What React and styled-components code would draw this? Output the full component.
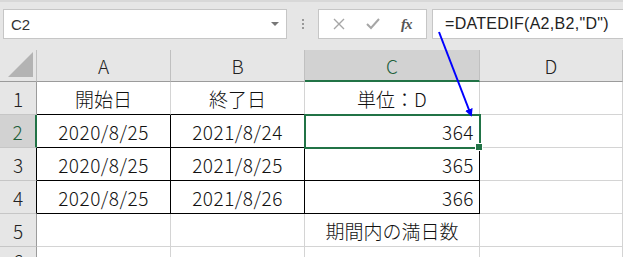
import React from 'react'
import styled, { createGlobalStyle } from 'styled-components'

const Global = createGlobalStyle`
  html, body { margin: 0; padding: 0; background: #fff; }
  body { font-family: "Noto Sans CJK JP", "Liberation Sans", sans-serif; }
`

const Page = styled.div`
  position: relative;
  width: 623px;
  height: 257px;
  overflow: hidden;
  background: #fff;
`

const Toolbar = styled.div`
  height: 50px;
  box-sizing: border-box;
  background: #e6e6e6;
  border-top: 2px solid #d8d8d8;
  display: flex;
  align-items: flex-start;
  padding-top: 7px;
  padding-left: 3px;
`

const NameBox = styled.div`
  width: 284px;
  height: 30px;
  box-sizing: border-box;
  background: #fff;
  border: 1px solid #c6c6c6;
  display: flex;
  align-items: center;
  justify-content: space-between;
  padding: 0 7px 0 7px;
  font-family: "Liberation Sans", sans-serif;
  font-size: 15px;
  color: #333;
`

const Caret = styled.span`
  width: 0;
  height: 0;
  border-left: 4px solid transparent;
  border-right: 4px solid transparent;
  border-top: 4px solid #777;
`

const Grip = styled.div`
  width: 31px;
  height: 30px;
  display: flex;
  flex-direction: column;
  align-items: center;
  justify-content: center;
  gap: 2px;
  span { width: 2px; height: 2px; background: #999; }
`

const Buttons = styled.div`
  width: 109px;
  height: 30px;
  box-sizing: border-box;
  background: #fff;
  border: 1px solid #c6c6c6;
  display: flex;
  align-items: center;
  justify-content: space-around;
  padding: 0 4px;
`

const Fx = styled.span`
  font-family: "Liberation Serif", serif;
  font-style: italic;
  font-weight: bold;
  font-size: 15px;
  color: #555;
  letter-spacing: -1px;
`

const FormulaBox = styled.div`
  margin-left: 5px;
  flex: 1;
  height: 30px;
  box-sizing: border-box;
  background: #fff;
  border: 1px solid #c6c6c6;
  border-right: none;
  display: flex;
  align-items: center;
  padding-left: 12px;
  font-family: "Liberation Sans", sans-serif;
  font-size: 16px;
  color: #222;
  letter-spacing: 0.3px;
`

const Sheet = styled.div`
  display: grid;
  grid-template-columns: 37px 134px 134px 175px 1fr;
  grid-template-rows: 32px repeat(5, 33px) 1fr;
  height: 207px;
  font-weight: 300;
`

const Corner = styled.div`
  background: #e6e6e6;
  border-right: 1px solid #c0c0c0;
  border-bottom: 1px solid #9b9b9b;
  box-sizing: border-box;
  display: flex;
  align-items: flex-end;
  justify-content: flex-end;
  padding: 0 3px 4px 0;
`

const ColHead = styled.div`
  box-sizing: border-box;
  background: ${(p) => (p.$sel ? '#d2d2d2' : '#e6e6e6')};
  border-right: 1px solid #c0c0c0;
  border-bottom: ${(p) => (p.$sel ? '2px solid #217346' : '1px solid #9b9b9b')};
  color: ${(p) => (p.$sel ? '#1d5e3a' : '#222')};
  display: flex;
  align-items: center;
  justify-content: center;
  font-size: 19px;
  padding-top: ${(p) => (p.$sel ? '1px' : '0')};
`

const RowHead = styled.div`
  box-sizing: border-box;
  background: ${(p) => (p.$sel ? '#d2d2d2' : '#e6e6e6')};
  border-bottom: 1px solid #c6c6c6;
  border-right: ${(p) => (p.$sel ? '2px solid #217346' : `1px solid ${p.$edge || '#9b9b9b'}`)};
  color: ${(p) => (p.$sel ? '#1d5e3a' : '#222')};
  display: flex;
  align-items: center;
  justify-content: center;
  font-size: 19px;
`

const Cell = styled.div`
  position: relative;
  box-sizing: border-box;
  border-right: 1px solid ${(p) => p.$r || '#d4d4d4'};
  border-bottom: 1px solid ${(p) => p.$b || '#d4d4d4'};
  display: flex;
  align-items: center;
  justify-content: ${(p) => (p.$num ? 'flex-end' : 'center')};
  padding-right: ${(p) => (p.$num ? '5px' : '0')};
  font-size: 19px;
  letter-spacing: ${(p) => (p.$digits ? '0.5px' : '0')};
  color: #111;
  white-space: nowrap;
  ${(p) =>
    p.$active &&
    `
    outline: 2px solid #217346;
    outline-offset: -1px;
    z-index: 2;
    &::after {
      content: '';
      position: absolute;
      right: -4px;
      bottom: -4px;
      width: 6px;
      height: 6px;
      background: #217346;
      border: 1px solid #fff;
    }
  `}
`

const Arrow = styled.svg`
  position: absolute;
  left: 0;
  top: 0;
  pointer-events: none;
  z-index: 5;
`

const K = '#000'

const rows = [
  { n: 1, a: '開始日', b: '終了日', c: '単位：D', ab: K, cb: K },
  { n: 2, a: '2020/8/25', b: '2021/8/24', c: '364', num: true, box: true, sel: true },
  { n: 3, a: '2020/8/25', b: '2021/8/25', c: '365', num: true, box: true, edge: K },
  { n: 4, a: '2020/8/25', b: '2021/8/26', c: '366', num: true, box: true, edge: K },
  { n: 5, a: '', b: '', c: '期間内の満日数' },
  { n: 6, a: '', b: '', c: '' },
]

export default function App() {
  return (
    <Page>
      <Global />
      <Toolbar>
        <NameBox>
          C2
          <Caret />
        </NameBox>
        <Grip>
          <span />
          <span />
          <span />
        </Grip>
        <Buttons>
          <svg width="12" height="12" viewBox="0 0 12 12">
            <path d="M1 1 L11 11 M11 1 L1 11" stroke="#a6a6a6" strokeWidth="1.4" />
          </svg>
          <svg width="14" height="12" viewBox="0 0 14 12">
            <path d="M1 6 L5 10 L13 1" stroke="#a6a6a6" strokeWidth="2" fill="none" />
          </svg>
          <Fx>fx</Fx>
        </Buttons>
        <FormulaBox>=DATEDIF(A2,B2,"D")</FormulaBox>
      </Toolbar>
      <Sheet>
        <Corner>
          <svg width="25" height="25" viewBox="0 0 25 25">
            <polygon points="25,0 25,25 0,25" fill="#b3b3b3" />
          </svg>
        </Corner>
        <ColHead>A</ColHead>
        <ColHead>B</ColHead>
        <ColHead $sel>C</ColHead>
        <ColHead>D</ColHead>
        {rows.map((r) => (
          <React.Fragment key={r.n}>
            <RowHead $sel={r.sel} $edge={r.edge}>
              {r.n}
            </RowHead>
            <Cell $digits={r.box} $b={r.box || r.ab ? K : undefined} $r={r.box ? K : undefined}>
              {r.a}
            </Cell>
            <Cell $digits={r.box} $b={r.box || r.ab ? K : undefined} $r={r.box ? K : undefined}>
              {r.b}
            </Cell>
            <Cell
              $num={r.num}
              $digits={r.box}
              $active={r.sel}
              $b={r.box || r.cb ? K : undefined}
              $r={r.box ? K : undefined}
            >
              {r.c}
            </Cell>
            <Cell />
          </React.Fragment>
        ))}
      </Sheet>
      <Arrow width="623" height="257">
        <defs>
          <marker id="head" markerWidth="8" markerHeight="8" refX="6" refY="4" orient="auto" markerUnits="userSpaceOnUse">
            <path d="M0 0 L8 4 L0 8 Z" fill="#0000ff" />
          </marker>
        </defs>
        <line x1="439" y1="32" x2="471" y2="115" stroke="#0000ff" strokeWidth="2" markerEnd="url(#head)" />
      </Arrow>
    </Page>
  )
}
